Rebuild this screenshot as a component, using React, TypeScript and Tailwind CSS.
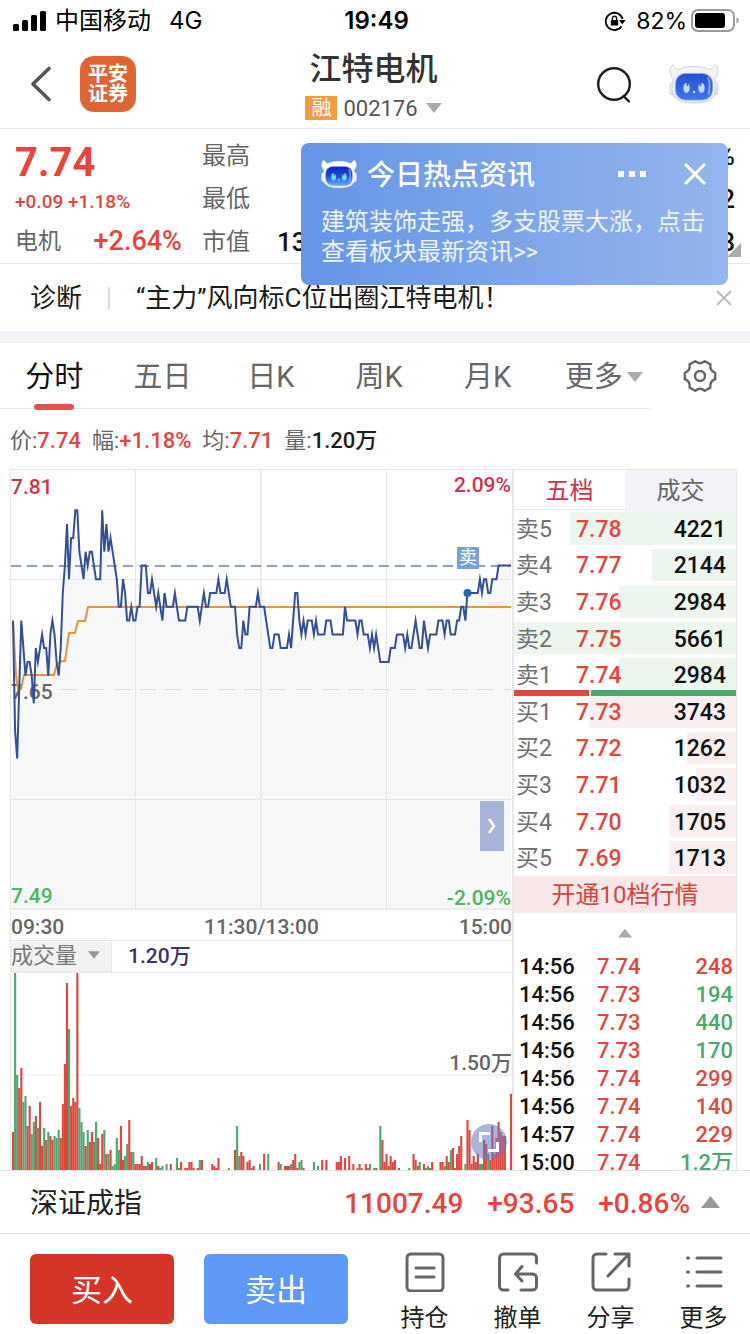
import React from "react";

/* Minute prices in cents, 09:30 to 15:00 */
const PRICES: number[] = [
  770, 762, 760, 765, 770, 768, 766, 767, 767, 766, 764, 768, 767, 768, 769, 768, 768, 766, 769, 770,
  769, 767, 766, 768, 772, 774, 777, 773, 776, 776, 778, 778, 775, 774, 773, 775, 774, 775, 775, 774,
  773, 773, 773, 778, 775, 777, 775, 776, 775, 774, 773, 771, 771, 773, 772, 770, 770, 771, 770, 770,
  771, 771, 774, 774, 774, 772, 772, 773, 772, 771, 772, 771, 770, 772, 771, 771, 771, 771, 772, 771,
  770, 770, 770, 770, 771, 771, 771, 771, 771, 771, 770, 771, 772, 771, 771, 772, 772, 772, 772, 773,
  772, 772, 772, 773, 772, 771, 771, 771, 769, 768, 768, 770, 769, 769, 771, 771, 771, 771, 772, 771,
  771, 771, 770, 769, 768, 768, 769, 769, 769, 768, 768, 768, 768, 769, 768, 770, 772, 772, 770, 769,
  770, 769, 770, 770, 770, 769, 770, 769, 769, 769, 769, 770, 770, 770, 769, 769, 769, 769, 769, 769,
  771, 770, 770, 770, 770, 770, 769, 770, 770, 769, 769, 769, 768, 769, 768, 769, 768, 767, 767, 767,
  767, 767, 768, 768, 768, 769, 769, 769, 769, 768, 769, 768, 768, 769, 770, 769, 768, 768, 770, 769,
  768, 769, 769, 769, 769, 770, 770, 770, 769, 770, 770, 769, 769, 769, 770, 770, 771, 771, 770, 772,
  772, 772, 772, 772, 772, 773, 772, 773, 773, 772, 772, 773, 773, 773, 774, 774, 774, 774, 774, 774,
  774,
];

/* [minute, bar height]; a negative height is a falling minute */
const VOLUMES: [number, number][] = [
  [0, 38], [1, -197], [2, -95], [3, 82], [4, 102], [5, -68], [6, -74], [7, 44], [8, 64], [9, -36],
  [10, -48], [11, 54], [12, -42], [13, 68], [14, 24], [15, -42], [16, 30], [17, -38], [18, 34], [19, 30],
  [20, -34], [21, -32], [22, -40], [23, 32], [24, 66], [25, 106], [26, 187], [27, -141], [28, 64], [29, 72],
  [30, 68], [31, 197], [32, -62], [33, -48], [34, -38], [35, 24], [36, -40], [37, 28], [38, 38], [39, -28],
  [40, -48], [41, 32], [42, 6], [43, 36], [44, -40], [45, 16], [46, -16], [47, 20], [48, -4], [49, -6],
  [50, -32], [51, -20], [52, 44], [53, 10], [54, -14], [55, -26], [56, 50], [57, 18], [58, -18], [59, 6],
  [60, 6], [61, 6], [62, 14], [63, 4], [64, 4], [65, -8], [66, 6], [67, 8], [69, -12], [70, 4],
  [71, -2], [72, -4], [74, -6], [76, 6], [79, -12], [80, -2], [81, 8], [83, 2], [84, 2], [85, 8],
  [86, 8], [87, 2], [89, 2], [90, -10], [91, 10], [96, 6], [97, 4], [98, 2], [99, 12], [104, -2],
  [107, 20], [108, -44], [109, -14], [110, 18], [111, 14], [113, 8], [114, 10], [115, 2], [116, 4], [119, -6],
  [121, 16], [123, -16], [128, 8], [129, -6], [131, 4], [132, 4], [133, 4], [134, -6], [135, 10], [136, 16],
  [137, 2], [138, -8], [139, -10], [140, 2], [145, -8], [147, -4], [149, 10], [151, 10], [156, 8], [157, 8],
  [158, 14], [160, 12], [162, 14], [164, 6], [166, -2], [167, 6], [168, 2], [170, 6], [171, 2], [172, -6],
  [174, -2], [175, 2], [177, -44], [178, 30], [179, 8], [180, 16], [181, 4], [182, 14], [183, 8], [184, 10],
  [186, 2], [191, -2], [193, 16], [194, 10], [195, 4], [196, -8], [198, 6], [199, -2], [200, -4], [201, 2],
  [202, 8], [206, 8], [207, 8], [208, -4], [209, 14], [210, 8], [211, -20], [212, 22], [213, 2], [214, 16],
  [215, 24], [216, 34], [218, -6], [219, 50], [220, 40], [221, 6], [222, 14], [223, 8], [224, 16], [225, -6],
  [226, -6], [227, 30], [228, 26], [229, -16], [230, 10], [231, 44], [232, 16], [233, 32], [234, 48], [235, 38],
  [236, 34], [237, 34], [240, 76],
];

const minuteX = (i: number) => 3 + i * 2.075;
const priceY = (p: number) => (781 - p) * 13.78;
const pricePoints = PRICES.map((p, i) => `${minuteX(i).toFixed(1)},${priceY(p).toFixed(1)}`).join(" ");

const DEPTH: [string, string, number][] = [
  ["卖5", "7.78", 4221],
  ["卖4", "7.77", 2144],
  ["卖3", "7.76", 2984],
  ["卖2", "7.75", 5661],
  ["卖1", "7.74", 2984],
  ["买1", "7.73", 3743],
  ["买2", "7.72", 1262],
  ["买3", "7.71", 1032],
  ["买4", "7.70", 1705],
  ["买5", "7.69", 1713],
];

const TRADES: [string, string, string, boolean][] = [
  ["14:56", "7.74", "248", true],
  ["14:56", "7.73", "194", false],
  ["14:56", "7.73", "440", false],
  ["14:56", "7.73", "170", false],
  ["14:56", "7.74", "299", true],
  ["14:56", "7.74", "140", true],
  ["14:57", "7.74", "229", true],
  ["15:00", "7.74", "1.2万", false],
];

function Triangle({ up, className }: { up?: boolean; className: string }) {
  return (
    <svg viewBox="0 0 16 10" className={className} fill="currentColor" aria-hidden="true">
      <path d={up ? "M8 0 16 10H0z" : "M0 0h16L8 10z"} />
    </svg>
  );
}

function Robot({ id, dark, className }: { id: string; dark?: boolean; className: string }) {
  return (
    <svg viewBox="0 0 50 40" className={className} aria-hidden="true">
      <defs>
        <linearGradient id={`${id}-face`} x1="0" y1="0" x2="0" y2="1">
          <stop offset="0" stopColor={dark ? "#1420c8" : "#2450d8"} />
          <stop offset=".5" stopColor={dark ? "#1c48dc" : "#2f62e0"} />
          <stop offset="1" stopColor={dark ? "#5fb4f4" : "#3f78ea"} />
        </linearGradient>
        <linearGradient id={`${id}-shell`} x1="0" y1="0" x2="0" y2="1">
          <stop offset="0" stopColor={dark ? "#ffffff" : "#f6f6f7"} />
          <stop offset="1" stopColor={dark ? "#eef2fb" : "#e6e6e9"} />
        </linearGradient>
      </defs>
      <g fill={`url(#${id}-shell)`} stroke={dark ? "#dfe7f7" : "#d2d3d8"} strokeWidth="1">
        <rect x="1" y="18" width="7" height="13" rx="3" />
        <rect x="42" y="18" width="7" height="13" rx="3" />
        <path d="M4.500 15C0 11 .5 4 3 1.500c2.500-2 2.500 4 7 4C14 3 19 2.500 25 2.500S36 3 40 5.500c4.500 0 4.500-6 7-4 2.500 2.500 3 9.500-1.500 13.500 1.500 4 2 9 1 14-2 7.500-10 10-21.500 10S5.500 36.500 3.500 29c-1-5-.5-10 1-14z" />
      </g>
      <rect x="6.500" y="9.500" width="37" height="26.500" rx="10" fill={`url(#${id}-face)`} stroke="#8f9fd0" strokeWidth=".8" />
      <path d="M39 14c2 3 2 12 .5 16" fill="none" stroke="#a9c4ff" strokeWidth="2" strokeLinecap="round" opacity=".7" />
      <ellipse cx="17.500" cy="24" rx="3.200" ry="5" fill={dark ? "#6fe0ff" : "#c3dbf8"} />
      <ellipse cx="32.500" cy="24" rx="3.200" ry="5" fill={dark ? "#6fe0ff" : "#c3dbf8"} />
      <path d="M18.500 18v4M31.500 18v4" stroke={dark ? "#1c48dc" : "#2c5cdd"} strokeWidth="1.500" />
      <circle cx="25" cy="28" r="1.200" fill="#d4e6ff" />
    </svg>
  );
}

function StatusBar() {
  return (
    <div className="grid h-10 shrink-0 grid-cols-[1fr_auto_1fr] items-center pr-[10px] pl-[13px] text-2xl leading-10 text-black">
      <div className="flex items-center">
        <svg viewBox="0 0 33 20" className="mr-[9px] h-5 w-[33px]" aria-label="信号">
          <rect x="0" y="13" width="6" height="7" rx="1.500" />
          <rect x="9" y="9" width="6" height="11" rx="1.500" />
          <rect x="18" y="4" width="6" height="16" rx="1.500" />
          <rect x="27" y="0" width="6" height="20" rx="1.500" />
        </svg>
        <span>中国移动</span>
        <span className="ml-[18px] pt-px font-['Inter','Roboto',sans-serif]">4G</span>
      </div>
      <div className="pt-px font-['Inter','Roboto',sans-serif] font-semibold">19:49</div>
      <div className="flex items-center justify-end">
        <svg viewBox="0 0 22 20" className="mr-[10px] h-5 w-[22px]" fill="none" stroke="#000" strokeWidth="1.800" aria-label="屏幕旋转锁定">
          <path d="M17.500 15.200A8.600 8.600 0 1 1 18.600 8" />
          <path d="M15 9h6.500l-3.200 4.400z" fill="#000" stroke="none" />
          <rect x="6.800" y="9" width="7.400" height="5.600" rx=".8" fill="#000" stroke="none" />
          <path d="M8.400 9V7.400a2.100 2.100 0 0 1 4.200 0V9" strokeWidth="1.400" />
        </svg>
        <span className="pt-px font-['Inter','Roboto',sans-serif] text-[23px]">82%</span>
        <svg viewBox="0 0 49 24" className="ml-1 h-6 w-[49px]" aria-label="电池">
          <rect x="1" y="1" width="42" height="21" rx="6" fill="none" stroke="#9b9b9b" strokeWidth="2" />
          <rect x="4" y="4" width="30" height="15" rx="3" />
          <path d="M45.500 8.500c3 1 3 5 0 6z" fill="#9b9b9b" />
        </svg>
      </div>
    </div>
  );
}

function Header() {
  return (
    <header className="grid h-[89px] shrink-0 grid-cols-[1fr_auto_1fr] items-center border-b border-[#e6e6e6] pr-[31px] pl-[28px]">
      <div className="flex items-center">
        <button aria-label="返回" className="mr-[28px]">
          <svg viewBox="0 0 24 36" className="h-9 w-6" fill="none" stroke="#555" strokeWidth="3.600" strokeLinecap="round" strokeLinejoin="round">
            <path d="M21 2.500 5 18l16 15.500" />
          </svg>
        </button>
        <a href="#home" className="flex size-14 flex-col items-center justify-center rounded-[14px] bg-[#de6434] text-[20px] leading-5 font-bold text-white">
          <span>平安</span>
          <span>证券</span>
        </a>
      </div>
      <div className="flex flex-col items-center gap-2 pt-px">
        <h1 className="text-[32px] leading-[38px] font-medium text-[#333]">江特电机</h1>
        <button className="flex h-6 items-center text-[#555]">
          <span className="mr-[6px] h-6 w-8 bg-[#f19d41] text-center text-[20px] leading-6 text-white">融</span>
          <span className="pt-[2px] text-[22px] leading-6">002176</span>
          <Triangle className="ml-2 h-[10px] w-4 text-[#aaa]" />
        </button>
      </div>
      <div className="flex items-center justify-end">
        <button aria-label="搜索" className="mr-[37px] pt-[2px]">
          <svg viewBox="0 0 36 38" className="h-[38px] w-9" fill="none" stroke="#1c1c22" strokeWidth="2.400" strokeLinecap="round">
            <circle cx="18" cy="18" r="15.800" />
            <path d="m27.500 30 5.500 5.500" />
          </svg>
        </button>
        <button aria-label="智能助手"><Robot id="assistant" className="h-10 w-[50px]" /></button>
      </div>
    </header>
  );
}

function NewsPopup() {
  return (
    <aside className="absolute top-[14px] right-[22px] z-10 h-[142px] w-[427px] rounded-lg bg-linear-to-r from-[#6595e5] to-[#94b5ed] px-5 pt-3 text-white">
      <div className="flex h-[38px] items-center">
        <Robot id="news" dark className="mr-[10px] h-[30px] w-9" />
        <h2 className="pt-1 text-[28px] leading-[38px] font-medium">今日热点资讯</h2>
        <button aria-label="更多选项" className="ml-auto">
          <svg viewBox="0 0 28 6" className="h-[6px] w-7" fill="#fff"><path d="M0 0h6v6H0zM11 0h6v6h-6zM22 0h6v6h-6z" /></svg>
        </button>
        <button aria-label="关闭" className="mr-[2px] ml-[38px]">
          <svg viewBox="0 0 22 22" className="size-[22px]" stroke="#fff" strokeWidth="3"><path d="m1 1 20 20M21 1 1 21" /></svg>
        </button>
      </div>
      <p className="mt-[14px] text-2xl leading-[30px] whitespace-nowrap text-[#eff4fd]">
        建筑装饰走强，多支股票大涨，点击<br />查看板块最新资讯&gt;&gt;
      </p>
    </aside>
  );
}

function Quote() {
  const stats = [
    ["最高", "", "%"],
    ["最低", "", "2"],
    ["市值", "13", "8"],
  ];
  return (
    <section className="relative flex h-[135px] border-b border-[#e3e4ec] pr-[15px] pl-[15px]">
      <div className="w-[187px] shrink-0 pt-[13px] text-[#e4453f]">
        <div className="text-[40px] leading-[42px] font-bold">7.74</div>
        <div className="text-[19px] leading-9 font-medium">+0.09 +1.18%</div>
        <div className="flex justify-between pr-5 leading-[43px]">
          <span className="text-[23px] text-[#666]">电机</span>
          <span className="text-[27px] font-medium">+2.64%</span>
        </div>
      </div>
      <dl className="flex-1 pt-[6px] leading-[43px]">
        {stats.map(([label, value, end]) => (
          <div key={label} className="flex">
            <dt className="w-[75px] text-2xl leading-[43px] text-[#666]">{label}</dt>
            <dd className="flex flex-1 justify-between text-[26px] font-medium text-[#111]">
              <span>{value}</span>
              <span>{end}</span>
            </dd>
          </div>
        ))}
      </dl>
      <svg viewBox="0 0 14 14" className="absolute right-[9px] bottom-[6px] size-[14px]" fill="#aaa" aria-hidden="true"><path d="M14 0v14H0z" /></svg>
      <NewsPopup />
    </section>
  );
}

function Diagnosis() {
  return (
    <section className="flex h-[67px] items-center pt-px pr-[18px] pl-[30px] text-[26px] text-[#1c1c1c]">
      <a href="#diagnosis">诊断</a>
      <span className="mx-[26px] h-[22px] w-[2px] bg-[#ddd]" />
      <a href="#article" className="whitespace-nowrap">“主力”风向标C位出圈江特电机！</a>
      <button aria-label="关闭提示" className="ml-auto">
        <svg viewBox="0 0 16 16" className="size-4" stroke="#b9b9c4" strokeWidth="1.800"><path d="m1 1 14 14M15 1 1 15" /></svg>
      </button>
    </section>
  );
}

function PeriodTabs() {
  const tabs = ["分时", "五日", "日K", "周K", "月K"];
  return (
    <div className="flex h-[66px]">
      <nav className="grid flex-1 grid-cols-6 border-b border-[#e6e6e6] text-[29px] leading-[64px] text-[#666]">
        {tabs.map((t, i) => (
          <button key={t} className={i === 0 ? "relative pt-[2px] text-[#111]" : "pt-[2px]"}>
            {t}
            {i === 0 && <span className="absolute -bottom-px left-1/2 h-[6px] w-10 -translate-x-1/2 rounded-[3px] bg-[#e4524d]" />}
          </button>
        ))}
        <button className="flex items-center justify-center pt-[2px] pl-4">
          更多
          <Triangle className="ml-1 h-[10px] w-4 text-[#aaa]" />
        </button>
      </nav>
      <button aria-label="设置" className="grid w-[100px] place-items-center">
        <svg viewBox="0 0 34 34" className="size-[34px]" fill="none" stroke="#666" strokeWidth="2.400" strokeLinejoin="round">
          <path d="M12.200 2.200Q17 6.200 21.800 2.200L27.400 5.400Q26.400 11.600 32.200 13.800V20.200Q26.400 22.400 27.400 28.600L21.800 31.800Q17 27.800 12.200 31.800L6.600 28.600Q7.600 22.400 1.800 20.200V13.800Q7.600 11.600 6.600 5.400Z" />
          <circle cx="17" cy="17" r="5" />
        </svg>
      </button>
    </div>
  );
}

function Summary() {
  return (
    <p className="flex h-[60px] items-center gap-[11px] pt-[2px] pl-[10px] text-[22px] text-[#666]">
      <span>价:<b className="font-medium text-[#e4453f]">7.74</b></span>
      <span>幅:<b className="font-medium text-[#e4453f]">+1.18%</b></span>
      <span>均:<b className="font-medium text-[#e4453f]">7.71</b></span>
      <span>量:<b className="font-medium text-[#1c1c1c]">1.20万</b></span>
    </p>
  );
}

function PriceChart() {
  return (
    <div className="relative h-[441px] text-[21px] leading-6">
      <span className="absolute top-[211px] left-px font-medium text-[#666]">7.65</span>
      <svg viewBox="0 0 502 441" preserveAspectRatio="none" className="relative block h-full w-full" aria-label="分时走势">
        <polygon points={`3,440 ${pricePoints} 501,440`} fill="#8090b0" fillOpacity=".07" />
        <g stroke="#e6e6e9" fill="none">
          <path d="M0 .5h502M.5 0v441M0 110.500h502M0 330.500h502M125.500 0v441M376.500 0v441" />
          <path d="M251 0v441M0 440h502" strokeWidth="2" stroke="#ebebed" />
          <path d="M52 220.500h450" stroke="#dcdcdf" strokeDasharray="16 10" />
        </g>
        <path d="M1 97h500" stroke="#93a0c8" strokeWidth="2" strokeDasharray="10 6" />
        <polyline points="3,152 6,206 8,220 11,220 14,206 44,206 47,195 52,192 55,192 59,164 65,164 68,152 75,152 78,138 501,138" fill="none" stroke="#e8943a" strokeWidth="2" />
        <polyline points={pricePoints} fill="none" stroke="#344f93" strokeWidth="2" strokeMiterlimit="8" />
        <circle cx="457.500" cy="124" r="4" fill="#2563c4" />
      </svg>
      <span className="absolute top-[6px] left-px font-medium text-[#d0334a]">7.81</span>
      <span className="absolute top-1 right-px font-medium text-[#d0334a]">2.09%</span>
      <span className="absolute bottom-[2px] left-px font-medium text-[#4cb560]">7.49</span>
      <span className="absolute right-px bottom-0 font-medium text-[#4cb560]">-2.09%</span>
      <span className="absolute top-[78px] right-[33px] size-[22px] bg-[#6f9bda]/95 text-center text-[18px] leading-[22px] text-white">卖</span>
      <button aria-label="收起盘口" className="absolute right-2 bottom-[59px] grid h-[50px] w-6 place-items-center bg-[#a6b2d8]">
        <svg viewBox="0 0 10 16" className="h-4 w-[10px]" fill="none" stroke="#fff" strokeWidth="2.600"><path d="m2 1 5 7-5 7" /></svg>
      </button>
    </div>
  );
}

function VolumeChart() {
  return (
    <div className="relative h-[198px]">
      <svg viewBox="0 0 502 198" preserveAspectRatio="none" className="block h-full w-full" aria-label="成交量">
        <path d="M0 .5h502M.5 0v198M0 103h502" stroke="#e9e9e9" />
        {VOLUMES.map(([i, v]) => (
          <rect key={i} x={minuteX(i) - 1} y={198 - Math.abs(v)} width="2.100" height={Math.abs(v)} fill={v > 0 ? "#e2453c" : "#4aa870"} />
        ))}
      </svg>
      <span className="absolute top-[79px] right-0 text-[21px] leading-6 font-medium text-[#666]">1.50万</span>
      <button aria-label="全屏" className="absolute right-[5px] bottom-[10px] grid size-9 place-items-center rounded-full bg-[#6478be]/55">
        <svg viewBox="0 0 20 20" className="size-5" fill="none" stroke="#fff" strokeWidth="3"><path d="M1.500 10V1.500H11M18.500 10v8.500H9" /></svg>
      </button>
    </div>
  );
}

function OrderBook() {
  const max = Math.max(...DEPTH.map((d) => d[2]));
  return (
    <div className="w-[225px] shrink-0 border-t border-r border-l-2 border-[#e8e8e8]">
      <div className="grid h-10 grid-cols-2 border-b border-[#e8e8e8] text-2xl leading-[42px]">
        <button className="text-[#d0334a]">五档</button>
        <button className="bg-[#f2f3f8] text-[#666]">成交</button>
      </div>
      <div className="relative isolate">
        <table className="h-[366px] w-full border-collapse text-[23px] leading-8">
          <tbody>
            {DEPTH.map(([label, price, size], i) => (
              <tr key={label} className="relative">
                <th scope="row" className="w-[62px] p-0 pt-[3px] pl-[2px] text-left font-normal text-[#707070]">{label}</th>
                <td className="p-0 pt-[3px] font-medium text-[#e4453f]">{price}</td>
                <td className="p-0 pt-[3px] pr-[10px] text-right font-medium text-[#111]">
                  {size}
                  <span
                    className={i < 5 ? "absolute inset-y-[2px] right-0 -z-10 bg-[#ecf6ef]" : "absolute inset-y-[2px] right-0 -z-10 bg-[#fbeeee]"}
                    style={{ width: `${(size / max) * 100}%` }}
                  />
                </td>
              </tr>
            ))}
          </tbody>
        </table>
        <div className="absolute inset-x-0 top-1/2 flex h-[6px] -translate-y-1/2 gap-[2px]">
          <span className="w-[34%] bg-[#e4453c]" />
          <span className="flex-1 bg-[#4aa870]" />
        </div>
      </div>
      <a href="#level2" className="block h-[37px] bg-[#f9e7e7] text-center text-2xl leading-[38px] text-[#d5453f]">开通10档行情</a>
      <button aria-label="收起" className="grid h-10 w-full place-items-center">
        <Triangle up className="h-[10px] w-[14px] text-[#aaa]" />
      </button>
      <table className="w-full text-[22px] leading-7 font-medium">
        <tbody>
          {TRADES.map(([time, price, size, rise], i) => (
            <tr key={i}>
              <td className="w-[83px] p-0 pl-[5px] text-[#111]">{time}</td>
              <td className="p-0 text-[#e4453f]">{price}</td>
              <td className={rise ? "p-0 pr-[3px] text-right text-[#e4453f]" : "p-0 pr-[3px] text-right text-[#4aa870]"}>{size}</td>
            </tr>
          ))}
        </tbody>
      </table>
    </div>
  );
}

function Footer() {
  const icon = "mx-auto size-10";
  const line = { fill: "none", stroke: "#666", strokeWidth: 3, strokeLinecap: "round" as const, strokeLinejoin: "round" as const };
  return (
    <footer className="relative shrink-0 bg-white">
      <a href="#index" className="flex h-16 items-center border-y border-[#e2e2e4] pt-1 pr-[30px] pl-[30px] text-[28px] text-[#222]">
        <span>深证成指</span>
        <span className="ml-auto flex items-center gap-6 font-medium text-[#e4453f]">
          <span>11007.49</span>
          <span>+93.65</span>
          <span>+0.86%</span>
        </span>
        <Triangle up className="mb-1 ml-[11px] h-3 w-[19px] text-[#999]" />
      </a>
      <div className="flex h-[100px] pt-5 pl-[30px]">
        <button className="h-[70px] w-36 rounded-md bg-[#d53529] pt-1 text-[31px] text-white">买入</button>
        <button className="ml-[30px] h-[70px] w-36 rounded-md bg-[#5e99f7] pt-1 text-[31px] text-white">卖出</button>
        <nav className="-mt-[2px] ml-[30px] grid flex-1 grid-cols-4 text-center text-2xl leading-6 text-[#222]">
          <button className="flex flex-col gap-[14px]">
            <svg viewBox="0 0 40 40" className={icon} {...line}>
              <rect x="2" y="2" width="36" height="37" rx="4" />
              <path d="M11 16h18M11 25h18" />
            </svg>
            <span className="w-full">持仓</span>
          </button>
          <button className="flex flex-col gap-[14px]">
            <svg viewBox="0 0 40 40" className={icon} {...line}>
              <path d="M10 38H5.500a4 4 0 0 1-4-4V6a4 4 0 0 1 4-4h29a4 4 0 0 1 4 4v5" />
              <path d="M24 14.500 17.500 22l6.500 7M18 22h16.500a4 4 0 0 1 4 4v8a4 4 0 0 1-4 4H23" />
            </svg>
            <span className="w-full">撤单</span>
          </button>
          <button className="flex flex-col gap-[14px]">
            <svg viewBox="0 0 40 40" className={icon} {...line}>
              <path d="M15 2H6a4 4 0 0 0-4 4v28a4 4 0 0 0 4 4h28a4 4 0 0 0 4-4v-7" />
              <path d="M24 2h14v12M37.500 2.500 17 24" />
            </svg>
            <span className="w-full">分享</span>
          </button>
          <button className="flex flex-col gap-[14px]">
            <svg viewBox="0 0 40 40" className={icon} {...line}>
              <path d="M3.500 6h1M3.500 20h1M3.500 34h1M13 6h24M13 20h24M13 34h24" />
            </svg>
            <span className="w-full">更多</span>
          </button>
        </nav>
      </div>
    </footer>
  );
}

export default function App() {
  return (
    <div className="flex h-dvh flex-col overflow-hidden bg-white font-['Roboto','Noto_Sans_CJK_SC',sans-serif]">
      <StatusBar />
      <Header />
      <main className="min-h-0 flex-1 overflow-hidden">
        <Quote />
        <Diagnosis />
        <div className="h-3 bg-[#f2f3f8]" />
        <PeriodTabs />
        <Summary />
        <section className="flex pr-[13px] pl-[10px]">
          <div className="min-w-0 flex-1">
            <PriceChart />
            <div className="grid h-[30px] grid-cols-3 border-l border-[#e8e8e8] text-[21px] leading-[34px] font-medium text-[#666]">
              <span>09:30</span>
              <span className="text-center">11:30/13:00</span>
              <span className="text-right">15:00</span>
            </div>
            <div className="flex h-8 items-center border-t border-l border-[#e8e8e8] text-[22px]">
              <button className="flex h-[30px] w-[101px] items-center border-r border-b border-[#e8e8e8] bg-[#f2f2f2] pb-[2px] text-[#777]">
                成交量
                <Triangle className="ml-[11px] h-[10px] w-3 text-[#999]" />
              </button>
              <span className="ml-4 pb-[2px] text-[21px] leading-7 font-medium text-[#3b3566]">1.20万</span>
            </div>
            <VolumeChart />
          </div>
          <OrderBook />
        </section>
      </main>
      <Footer />
    </div>
  );
}
